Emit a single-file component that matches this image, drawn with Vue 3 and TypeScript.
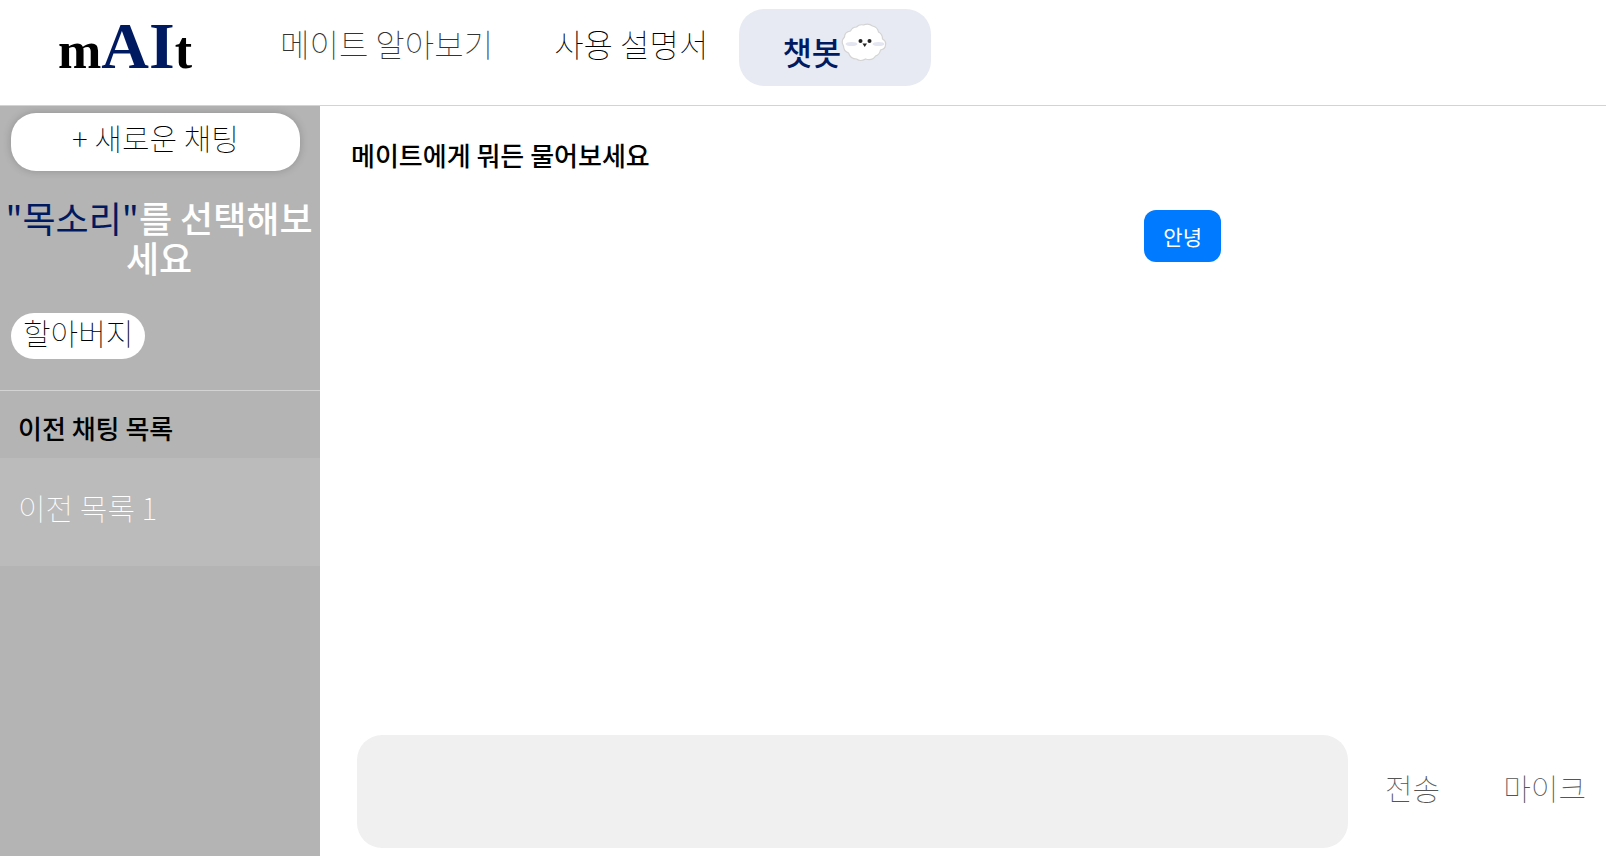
<script setup lang="ts">
import { ref } from 'vue'

interface Message {
  id: number
  text: string
}

const voices = ref<string[]>(['할아버지'])
const history = ref<string[]>(['이전 목록 1'])
const messages = ref<Message[]>([{ id: 1, text: '안녕' }])
const draft = ref('')

function send(): void {
  const text = draft.value.trim()
  if (!text) return
  messages.value.push({ id: messages.value.length + 1, text })
  draft.value = ''
}

function startChat(): void {
  messages.value = []
}
</script>

<template>
  <div class="page">
    <header class="topbar">
      <a class="logo" href="#">m<span class="logo-ai">AI</span>t</a>
      <nav class="nav">
        <a class="nav-link soft" href="#about">메이트 알아보기</a>
        <a class="nav-link" href="#guide">사용 설명서</a>
        <a class="nav-link active" href="#chat">
          <span class="active-label">챗봇</span>
          <svg class="mascot" viewBox="0 0 46 40" aria-hidden="true">
            <path
              d="M15 4 Q18 1 22 2 Q27 0 31 3 Q36 4 37 9 Q41 11 41 16 Q45 18 44 22 Q44 26 39 27 Q38 32 34 33 Q31 38 24 36 Q19 39 15 36 Q9 36 7 30 Q2 28 2 23 Q-1 18 3 14 Q3 9 9 8 Q11 4 15 4Z"
              fill="#fff" stroke="#d3d3d3" stroke-width="1.200"
            />
            <ellipse cx="10" cy="21" rx="6" ry="2" fill="#e3e5f0" />
            <ellipse cx="37" cy="21" rx="6" ry="2" fill="#e3e5f0" />
            <circle cx="19" cy="18" r="2" fill="#222" />
            <circle cx="28" cy="18" r="2" fill="#222" />
            <path d="M21 20.500 H25.500 L23.200 24Z" fill="#222" />
          </svg>
        </a>
      </nav>
    </header>

    <div class="body">
      <aside class="sidebar">
        <button class="new-chat" type="button" @click="startChat">+ 새로운 채팅</button>
        <h2 class="voice-title"><span class="accent">"목소리"</span>를 선택해보세요</h2>
        <div class="voices">
          <button v-for="voice in voices" :key="voice" class="voice" type="button">{{ voice }}</button>
        </div>
        <h3 class="history-title">이전 채팅 목록</h3>
        <ul class="history">
          <li v-for="item in history" :key="item">
            <button class="history-item" type="button">{{ item }}</button>
          </li>
        </ul>
      </aside>

      <main class="chat">
        <h1 class="chat-title">메이트에게 뭐든 물어보세요</h1>
        <div class="messages">
          <p v-for="message in messages" :key="message.id" class="bubble">{{ message.text }}</p>
        </div>
        <form class="composer" @submit.prevent="send">
          <input v-model="draft" class="field" type="text" aria-label="메시지" />
          <button class="action" type="submit">전송</button>
          <button class="action" type="button">마이크</button>
        </form>
      </main>
    </div>
  </div>
</template>

<style>
body {
  margin: 0;
}
</style>

<style scoped>
.page {
  display: flex;
  flex-direction: column;
  min-height: 100vh;
  background: #fff;
  color: #000;
  font-family: "Noto Sans CJK KR", sans-serif;
  font-weight: 100;
}

.page * {
  box-sizing: border-box;
}

button,
input {
  border: 0;
  font: inherit;
  color: inherit;
}

button {
  padding: 0;
  background: none;
  cursor: pointer;
}

a {
  color: inherit;
  text-decoration: none;
}

.topbar {
  display: flex;
  align-items: flex-start;
  height: 106px;
  padding-left: 58px;
  border-bottom: 1px solid #d3d3d3;
}

.logo {
  width: 192px;
  margin-top: 8px;
  font-family: "Liberation Serif", serif;
  font-size: 52px;
  font-weight: 700;
  line-height: 76px;
  white-space: nowrap;
}

.logo-ai {
  color: #001a62;
  font-size: 66px;
  line-height: 76px;
}

.nav {
  display: flex;
  padding-top: 9px;
}

.nav-link {
  padding: 10px 31px 10px 30px;
  font-size: 32px;
  line-height: 48px;
  white-space: nowrap;
}

.soft {
  color: #333;
}

.active {
  display: flex;
  align-items: flex-start;
  height: 77px;
  padding: 14px 43px;
  border-radius: 25px;
  background: #e7eaf2;
  color: #001a62;
  font-weight: 500;
}

.active-label {
  padding-top: 4px;
}

.mascot {
  width: 47px;
  height: 40px;
}

.body {
  display: flex;
  flex: 1;
}

.sidebar {
  flex: 0 0 320px;
  background: #b4b4b4;
}

.new-chat {
  display: block;
  width: 289px;
  height: 58px;
  margin: 7px 11px 0;
  padding-bottom: 10px;
  border-radius: 25px;
  background: #fff;
  box-shadow: 0 0 8px rgba(0, 0, 0, 0.2);
  font-size: 30px;
  line-height: 48px;
}

.voice-title {
  margin: 26px 2px 36px 0;
  color: #fff;
  font-size: 36px;
  font-weight: 500;
  line-height: 40px;
  text-align: center;
  word-break: break-all;
}

.accent {
  color: #001a62;
  font-weight: 400;
}

.voices {
  display: flex;
  gap: 8px;
  padding: 0 11px 31px;
  border-bottom: 1px solid #d3d3d3;
}

.voice {
  height: 46px;
  padding: 0 12px 8px;
  border-radius: 23px;
  background: #fff;
  font-size: 30px;
  line-height: 38px;
}

.history-title {
  margin: 0;
  padding: 16px 18px 10px;
  font-size: 26px;
  font-weight: 500;
  line-height: 41px;
}

.history {
  margin: 0;
  padding: 0;
  list-style: none;
}

.history-item {
  display: block;
  width: 100%;
  height: 108px;
  padding: 0 18px 10px;
  background: #bbb;
  color: #fff;
  font-size: 30px;
  text-align: left;
}

.chat {
  display: flex;
  flex: 1;
  flex-direction: column;
  min-width: 0;
}

.chat-title {
  margin: 29px 31px 35px;
  font-size: 26px;
  font-weight: 500;
  line-height: 40px;
}

.messages {
  display: flex;
  flex: 1;
  flex-direction: column;
  align-items: flex-end;
  gap: 12px;
  padding-right: 385px;
}

.bubble {
  margin: 0;
  padding: 11px 19px;
  border-radius: 12px;
  background: #007bff;
  color: #fff;
  font-size: 21px;
  font-weight: 400;
  line-height: 30px;
}

.composer {
  display: flex;
  align-items: center;
  padding: 0 20px 8px 37px;
}

.field {
  flex: 1;
  min-width: 0;
  height: 113px;
  margin-right: 37px;
  padding: 0 25px;
  border-radius: 25px;
  background: #f0f0f0;
  font-size: 30px;
}

.action {
  padding-bottom: 10px;
  color: #555;
  font-size: 30px;
  line-height: 48px;
  white-space: nowrap;
}

.action + .action {
  margin-left: 63px;
}
</style>
